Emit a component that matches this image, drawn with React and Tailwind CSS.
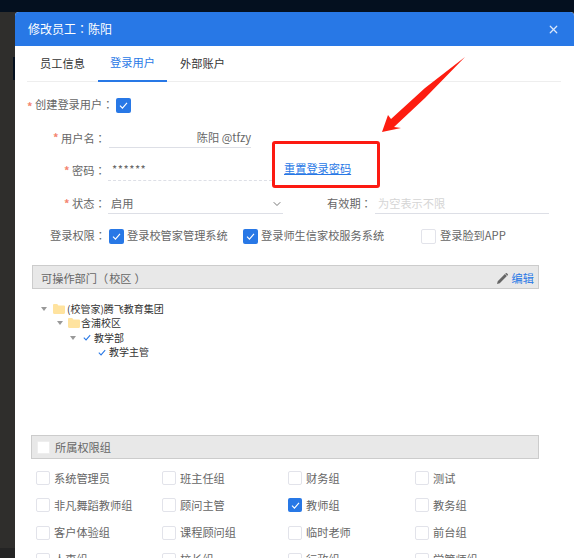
import React from 'react';
import { ChevronDown, X } from 'lucide-react';

const font = { fontFamily: '"Noto Sans CJK SC", "Liberation Sans", sans-serif' };

const groups = [
  { name: '系统管理员' }, { name: '班主任组' }, { name: '财务组' }, { name: '测试' },
  { name: '非凡舞蹈教师组' }, { name: '顾问主管' }, { name: '教师组', checked: true }, { name: '教务组' },
  { name: '客户体验组' }, { name: '课程顾问组' }, { name: '临时老师' }, { name: '前台组' },
  { name: '人事组' }, { name: '校长组' }, { name: '行政组' }, { name: '学管师组' },
];

// full-width punctuation sits centred in the original font, TC does the same
function Punct({ children }) {
  return <span className="font-['Noto_Sans_CJK_TC']">{children}</span>;
}

function Tick({ className }) {
  return (
    <svg viewBox="0 0 10 8" className={className} fill="none">
      <path d="M1 4.2 3.8 7 9 1" stroke="currentColor" strokeWidth="1.3" />
    </svg>
  );
}

function Checkbox({ checked, size = 'w-[15px] h-[15px]' }) {
  return checked ? (
    <span className={`${size} shrink-0 rounded-[2px] bg-[#2878e6] flex items-center justify-center text-white`}>
      <Tick className="w-[9px] h-[7px]" />
    </span>
  ) : (
    <span className={`${size} shrink-0 rounded-[2px] bg-white border border-[#e2e3ea]`} />
  );
}

function Star() {
  return <span className="w-[5px] text-[#f4856f] text-[11px] font-bold leading-none mr-[3px] mt-[3px]">*</span>;
}

function Folder({ className }) {
  return (
    <svg viewBox="0 0 12 10" className={className}>
      <path d="M0 1.2C0 .5.5 0 1.2 0h3l1.2 1.4h5.4c.7 0 1.2.5 1.2 1.2v6.2c0 .7-.5 1.2-1.2 1.2H1.2C.5 10 0 9.500 0 8.800z" fill="#ffe39f" />
    </svg>
  );
}

function Caret() {
  return <span className="w-0 h-0 border-x-[3px] border-x-transparent border-t-[4px] border-t-[#999] shrink-0" />;
}

function TreeRow({ indent, children }) {
  return <div className={`flex items-center h-[14.300px] text-[#333] ${indent}`}>{children}</div>;
}

export default function App() {
  return (
    <div className="relative w-[574px] h-[558px] overflow-hidden bg-[#2f2e2c] text-[11.200px] leading-none" style={font}>
      <div className="h-3 bg-[#04101f]" />
      {/* bits of the page behind the dialog */}
      <div className="absolute left-[13px] top-[57px] w-[2px] h-[23px] bg-[#04101f]" />
      <div className="absolute left-0 bottom-0 w-[15px] h-[10px] bg-[#242424]" />

      <div className="relative ml-[15px] h-[546px] bg-white rounded-t-[4px] overflow-hidden text-[#666]">
        <div className="h-[34px] bg-[#2878e6] flex items-center justify-between pl-[13px] pr-[14px] text-white text-[12px]">
          <span>修改员工<Punct>：</Punct>陈阳</span>
          <X className="w-[13px] h-[13px] text-[#dbe8fb]" strokeWidth={2.2} />
        </div>

        <div className="mx-3 mr-[13px] h-[36px] flex border-b border-[#eeeeee] text-[#333]">
          <div className="w-[71px] flex items-center justify-center">员工信息</div>
          <div className="w-[69px] flex items-center justify-center text-[#2878e6] border-b-2 border-[#2878e6] h-[36px]">登录用户</div>
          <div className="w-[71px] flex items-center justify-center">外部账户</div>
        </div>

        <div className="flex items-center h-6 mt-[11px] ml-3">
          <Star />
          <span className="w-[81px]">创建登录用户<Punct>：</Punct></span>
          <Checkbox checked />
        </div>

        <div className="flex items-center h-6 mt-[7px] ml-[38px]">
          <Star />
          <span className="w-[48px] pt-[5px]">用户名<Punct>：</Punct></span>
          <div className="w-[142px] h-6 border-b border-[#dddfe6] pt-[5px] flex items-center justify-end">
            <span>陈阳 @tfzy</span>
          </div>
        </div>

        <div className="flex items-center h-[25px] mt-2 ml-[49px]">
          <Star />
          <span className="w-[36px] pt-1">密码<Punct>：</Punct></span>
          <div className="w-[164px] h-[25px] border-b border-dashed border-[#dddfe6] pl-[4px] pt-1 flex items-center tracking-[0.5px]">******</div>
          <a className="ml-[12px] mt-px text-[#2878e6] underline">重置登录密码</a>
        </div>

        <div className="flex items-center h-6 mt-[9px] ml-[49px]">
          <Star />
          <span className="w-[36px] pt-1">状态<Punct>：</Punct></span>
          <div className="w-[175px] h-6 border-b border-[#dddfe6] pl-[3px] pt-1 flex items-center justify-between">
            <span>启用</span>
            <ChevronDown className="w-3 h-3 text-[#777]" />
          </div>
          <span className="ml-[44px] w-[48px] pt-1">有效期<Punct>：</Punct></span>
          <div className="w-[174px] h-6 border-b border-[#dddfe6] pl-[3px] pt-1 flex items-center text-[#d5d5d5]">为空表示不限</div>
        </div>

        <div className="flex items-center h-6 mt-[10px] ml-[35px]">
          <span className="w-[59px]">登录权限<Punct>：</Punct></span>
          <Checkbox checked />
          <span className="ml-[3px] w-[116px]">登录校管家管理系统</span>
          <Checkbox checked />
          <span className="ml-[3px] w-[160px]">登录师生信家校服务系统</span>
          <Checkbox />
          <span className="ml-[4px]">登录脸到APP</span>
        </div>

        <div className="ml-[17px] w-[507px] h-[24px] mt-[17px] bg-[#e8e8e8] border border-[#cccccc] flex items-center justify-between pl-2 pr-[4px] pt-[3px]">
          <span>可操作部门<Punct>（</Punct><span className="ml-px mr-[3px]">校区</span><Punct>）</Punct></span>
          <span className="flex items-center text-[#2878e6]">
            <svg viewBox="0 0 12 12" className="w-[11px] h-[11px] mr-[4px]">
              <path d="M0 12 .8 9 8.600 1.200 10.800 3.400 3 11.200zM9.400.4a1 1 0 0 1 1.400 0l.8.8a1 1 0 0 1 0 1.400l-.3.300L9.100.7z" fill="#666" />
            </svg>
            编辑
          </span>
        </div>

        <div className="mt-[13px] text-[10px]">
          <TreeRow indent="ml-[26px]">
            <Caret />
            <Folder className="w-3 h-[10px] ml-[6px] mr-[2px] shrink-0" />
            <span>(校管家)腾飞教育集团</span>
          </TreeRow>
          <TreeRow indent="ml-[42px]">
            <Caret />
            <Folder className="w-3 h-[10px] ml-[5px] mr-px shrink-0" />
            <span>含浦校区</span>
          </TreeRow>
          <TreeRow indent="ml-[55px]">
            <Caret />
            <Tick className="w-2 h-[7px] ml-[7px] mr-[3px] text-[#2878e6]" />
            <span>教学部</span>
          </TreeRow>
          <TreeRow indent="ml-[83px]">
            <Tick className="w-2 h-[7px] mr-[3px] text-[#2878e6]" />
            <span>教学主管</span>
          </TreeRow>
        </div>

        <div className="ml-[16px] w-[508px] h-[24px] mt-[76px] bg-[#e8e8e8] border border-[#cccccc] flex items-center pl-[5px]">
          <span className="w-[13px] h-[13px] bg-white border border-[#eeeeee] rounded-[1px] mr-[5px]" />
          <span>所属权限组</span>
        </div>

        <div className="ml-[21px] mt-[12px] grid grid-cols-[126px_126px_127px_100px] auto-rows-[27.300px]">
          {groups.map((g) => (
            <div key={g.name} className="flex items-center h-[14px]">
              <Checkbox checked={g.checked} size="w-[14px] h-[14px]" />
              <span className="ml-[4px]">{g.name}</span>
            </div>
          ))}
        </div>
      </div>

      {/* red annotations drawn over the screenshot */}
      <div className="absolute left-[272px] top-[141px] w-[108px] h-[47px] border-[3px] border-[#fc1a12] rounded-[3px]" />
      <svg className="absolute left-0 top-0 w-[574px] h-[558px] pointer-events-none" viewBox="0 0 574 558">
        <polygon points="465,57 425,98 394,127 401,128 382,132 388,115 391,119 425,88" fill="#fd1d10" />
      </svg>
    </div>
  );
}
